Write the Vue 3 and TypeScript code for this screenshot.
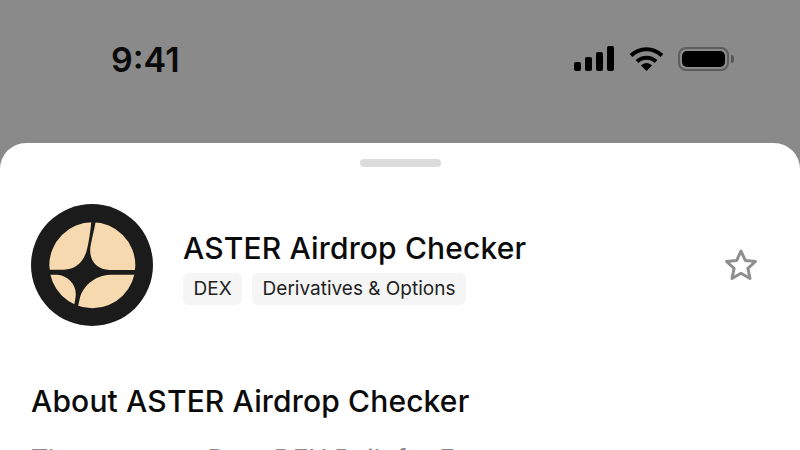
<script setup lang="ts">
const tags: string[] = ['DEX', 'Derivatives & Options']
</script>

<template>
  <div class="screen">
    <header class="status">
      <span class="time">9:41</span>
      <div class="indicators">
        <svg class="signal" width="40" height="26" viewBox="0 0 40 26">
          <rect x="0" y="16" width="7" height="9" rx="2" />
          <rect x="11" y="11" width="7" height="14" rx="2" />
          <rect x="22" y="6" width="7" height="19" rx="2" />
          <rect x="33" y="0" width="7" height="25" rx="2" />
        </svg>
        <svg class="wifi" width="35" height="26" viewBox="0 0 35 26">
          <path d="M2 9.500C11 1 24 1 33 9.500" fill="none" stroke="#000" stroke-width="4" />
          <path d="M8 15.500C13.500 10.500 21.500 10.500 27 15.500" fill="none" stroke="#000" stroke-width="4" />
          <path d="M12 19.500C15 16 20 16 23 19.500L17.500 25Z" fill="#000" />
        </svg>
        <div class="battery">
          <div class="battery-body"><div class="battery-fill"></div></div>
          <div class="battery-cap"></div>
        </div>
      </div>
    </header>

    <main class="sheet">
      <div class="handle"></div>
      <section class="head">
        <svg class="logo" width="122" height="122" viewBox="92 40 366 366">
          <defs>
            <clipPath id="logoDisc"><circle cx="276" cy="224" r="129" /></clipPath>
          </defs>
          <circle cx="275" cy="223" r="183" fill="#1b1b1b" />
          <g clip-path="url(#logoDisc)" fill="#f6d9af">
            <path d="M140 80H274C272 110 267 145 261 172C252 212 228 236 190 237L140 237Z" />
            <path d="M288 80H420V238H328C290 236 266 212 270 170C274 145 283 115 288 80Z" />
            <path d="M140 252H170C205 254 230 285 226 316C225 328 222 340 218 360H140Z" />
            <path d="M420 252H330C280 254 245 290 238 325C236 335 233 345 231 360H420Z" />
          </g>
        </svg>
        <div class="title-block">
          <h1 class="title">ASTER Airdrop Checker</h1>
          <div class="tags">
            <span v-for="t in tags" :key="t" class="tag">{{ t }}</span>
          </div>
        </div>
        <svg class="star" width="36" height="34" viewBox="0 0 36 34">
          <path d="M18 3L22.300 12.400L32.500 13.500L24.900 20.400L27 30.500L18 25.300L9 30.500L11.100 20.400L3.500 13.500L13.700 12.400Z" fill="none" stroke="#8f8f8f" stroke-width="3" stroke-linejoin="round" />
        </svg>
      </section>
      <section class="about">
        <h2 class="about-title">About ASTER Airdrop Checker</h2>
        <p class="about-text">The next-gen Perp DEX Built for Everyone</p>
      </section>
    </main>
  </div>
</template>

<style>
html, body { margin: 0; overflow: hidden; }
</style>

<style scoped>
.screen {
  width: 800px;
  height: 450px;
  overflow: hidden;
  display: flex;
  flex-direction: column;
  background: #8a8a8a;
  font-family: Inter, "Liberation Sans", sans-serif;
  color: #0b0b0b;
}
.status {
  height: 143px;
  flex: none;
  box-sizing: border-box;
  padding: 38px 66px 0 111px;
  display: flex;
  justify-content: space-between;
  align-items: flex-start;
}
.time {
  font-size: 34px;
  font-weight: 600;
  line-height: 44px;
  color: #0a0a0a;
}
.indicators {
  display: flex;
  align-items: center;
  gap: 14.500px;
  padding-top: 8px;
}
.battery { display: flex; align-items: center; gap: 2px; }
.battery-body {
  width: 51px;
  height: 24px;
  box-sizing: border-box;
  border: 2px solid #5c5c5c;
  border-radius: 8px;
  padding: 2px;
}
.battery-fill { height: 100%; background: #000; border-radius: 5px; }
.battery-cap {
  width: 3px;
  height: 8px;
  background: #555;
  border-radius: 0 3px 3px 0;
}
.sheet {
  flex: 1;
  background: #fff;
  border-radius: 26px 26px 0 0;
  padding: 16px 31px 0;
  display: flex;
  flex-direction: column;
}
.handle {
  align-self: center;
  width: 81px;
  height: 8px;
  border-radius: 4px;
  background: #dcdcdc;
}
.head {
  display: flex;
  align-items: center;
  margin-top: 37px;
}
.logo { flex: none; }
.title-block { margin-left: 30px; flex: 1; }
.title {
  margin: 0;
  font-size: 30px;
  font-weight: 500;
  line-height: 46px;
  letter-spacing: 0.15px;
}
.tags { display: flex; gap: 10px; margin-top: 2px; }
.tag {
  background: #f5f5f5;
  border-radius: 6px;
  padding: 0 10.500px;
  height: 32px;
  line-height: 32px;
  font-size: 19px;
  color: #222;
}
.star { flex: none; margin-right: 10px; }
.about { margin-top: 55px; }
.about-title {
  margin: 0;
  font-size: 30px;
  font-weight: 500;
  line-height: 40px;
  letter-spacing: 0.15px;
}
.about-text {
  margin: 22px 0 0;
  font-size: 26.500px;
  line-height: 32px;
  color: #8a8a8a;
  white-space: nowrap;
}
</style>
